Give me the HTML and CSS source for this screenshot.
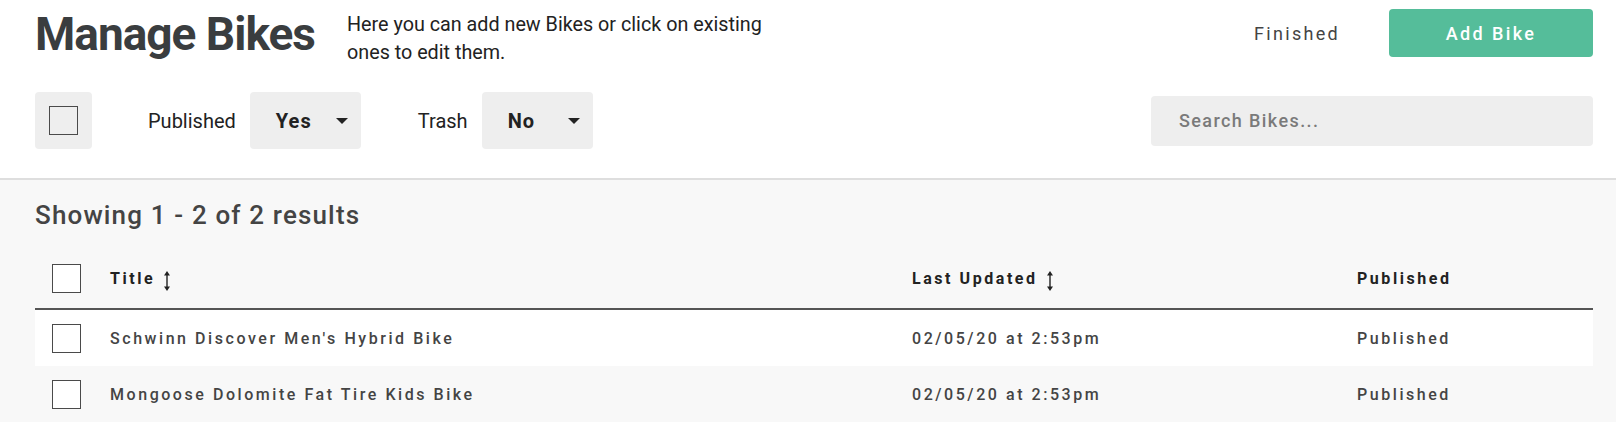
FILE: index.html
```html
<!DOCTYPE html>
<html lang="en">
<head>
<meta charset="utf-8">
<title>Manage Bikes</title>
<link rel="stylesheet" href="styles.css">
</head>
<body>
<div class="top">
  <header class="header">
    <div class="title-group">
      <h1 class="title">Manage Bikes</h1>
      <p class="desc">Here you can add new Bikes or click on existing<br>ones to edit them.</p>
    </div>
    <div class="actions">
      <button class="btn-link">Finished</button>
      <button class="btn-primary">Add Bike</button>
    </div>
  </header>
  <div class="filters">
    <div class="filter-left">
      <div class="check-tile"><span class="checkbox"></span></div>
      <span class="filter-label first">Published</span>
      <div class="select"><span class="select-value">Yes</span><span class="caret"></span></div>
      <span class="filter-label">Trash</span>
      <div class="select"><span class="select-value">No</span><span class="caret"></span></div>
    </div>
    <div class="search"><span class="placeholder">Search Bikes...</span></div>
  </div>
</div>
<section class="results">
  <h2 class="results-title">Showing 1 - 2 of 2 results</h2>
  <div class="table">
    <div class="row head">
      <div class="cell check"><span class="checkbox"></span></div>
      <div class="cell">Title <svg class="sort" width="8" height="22" viewBox="0 0 8 22"><path d="M4 3V19" stroke="#222" stroke-width="1.4"/><path d="M4 1L7 5.5H1Z M4 21L7 16.5H1Z" fill="#222"/></svg></div>
      <div class="cell">Last Updated <svg class="sort" width="8" height="22" viewBox="0 0 8 22"><path d="M4 3V19" stroke="#222" stroke-width="1.4"/><path d="M4 1L7 5.5H1Z M4 21L7 16.5H1Z" fill="#222"/></svg></div>
      <div class="cell">Published</div>
    </div>
    <div class="row body odd">
      <div class="cell check"><span class="checkbox"></span></div>
      <div class="cell">Schwinn Discover Men's Hybrid Bike</div>
      <div class="cell">02/05/20 at 2:53pm</div>
      <div class="cell">Published</div>
    </div>
    <div class="row body">
      <div class="cell check"><span class="checkbox"></span></div>
      <div class="cell">Mongoose Dolomite Fat Tire Kids Bike</div>
      <div class="cell">02/05/20 at 2:53pm</div>
      <div class="cell">Published</div>
    </div>
  </div>
</section>
</body>
</html>
```
FILE: styles.css
```css
* { box-sizing: border-box; }
body {
  margin: 0;
  background: #fff;
  font-family: Roboto, "Liberation Sans", Arial, sans-serif;
  color: #333;
}
.top { padding: 9px 23px 0 35px; }
.header {
  display: flex;
  justify-content: space-between;
  align-items: flex-start;
}
.title-group { display: flex; align-items: flex-start; }
.title {
  margin: 0;
  font-size: 46px;
  line-height: 50px;
  font-weight: 700;
  letter-spacing: -1px;
  color: #3a3d3f;
}
.desc {
  margin: 2px 0 0 32px;
  font-size: 19.75px;
  line-height: 28px;
  color: #222;
}
.actions { display: flex; align-items: center; height: 48px; }
.btn-link {
  border: 0;
  background: none;
  font-family: inherit;
  font-size: 18px;
  letter-spacing: 2.3px;
  color: #444;
  padding: 0;
  margin-right: 49px;
}
.btn-primary {
  border: 0;
  width: 204px;
  height: 48px;
  border-radius: 4px;
  background: #55bd9a;
  color: #fff;
  font-family: inherit;
  font-size: 18px;
  font-weight: 500;
  letter-spacing: 2.4px;
}
.filters {
  display: flex;
  justify-content: space-between;
  align-items: center;
  margin-top: 25px;
  height: 57px;
}
.filter-left { display: flex; align-items: center; }
.check-tile {
  width: 57px;
  height: 57px;
  border-radius: 4px;
  background: #eeeeee;
  display: flex;
  align-items: center;
  justify-content: center;
}
.checkbox {
  display: block;
  width: 29px;
  height: 29px;
  border: 1.5px solid #4a4a4a;
  background: #fff;
}
.check-tile .checkbox { background: transparent; }
.filter-label {
  font-size: 20px;
  color: #222;
  margin: 0 14px 0 57px;
}
.filter-label.first { margin-left: 56px; }
.select {
  width: 111px;
  height: 57px;
  border-radius: 4px;
  background: #eeeeee;
  display: flex;
  align-items: center;
  justify-content: space-between;
  padding: 0 13px 0 26px;
}
.select-value {
  font-size: 20px;
  font-weight: 700;
  letter-spacing: 1px;
  color: #222;
}
.caret {
  width: 0;
  height: 0;
  border-left: 6px solid transparent;
  border-right: 6px solid transparent;
  border-top: 6px solid #222;
}
.search {
  width: 442px;
  height: 50px;
  border-radius: 4px;
  background: #eeeeee;
  display: flex;
  align-items: center;
  padding-left: 28px;
}
.placeholder {
  font-size: 18px;
  font-weight: 500;
  letter-spacing: 1.4px;
  color: #7a7a7a;
}
.results {
  margin-top: 29px;
  border-top: 2px solid #dedede;
  background: #f8f8f8;
  padding: 19px 23px 0 35px;
}
.results-title {
  margin: 0;
  font-size: 26px;
  line-height: 32px;
  font-weight: 500;
  letter-spacing: 1.15px;
  color: #444;
}
.table { margin-top: 20px; }
.row {
  display: grid;
  grid-template-columns: 75px 802px 445px 1fr;
  align-items: center;
  font-size: 16px;
  letter-spacing: 2.55px;
}
.row.head {
  height: 59px;
  padding-bottom: 2px;
  border-bottom: 2px solid #555;
  font-weight: 700;
  color: #222;
}
.row.body {
  height: 56px;
  font-weight: 500;
  color: #444;
}
.row.odd { background: #fff; }
.cell { display: flex; align-items: center; white-space: nowrap; }
.cell.check { padding-left: 17px; }
.sort { margin-left: 8px; margin-top: 4px; }
```
